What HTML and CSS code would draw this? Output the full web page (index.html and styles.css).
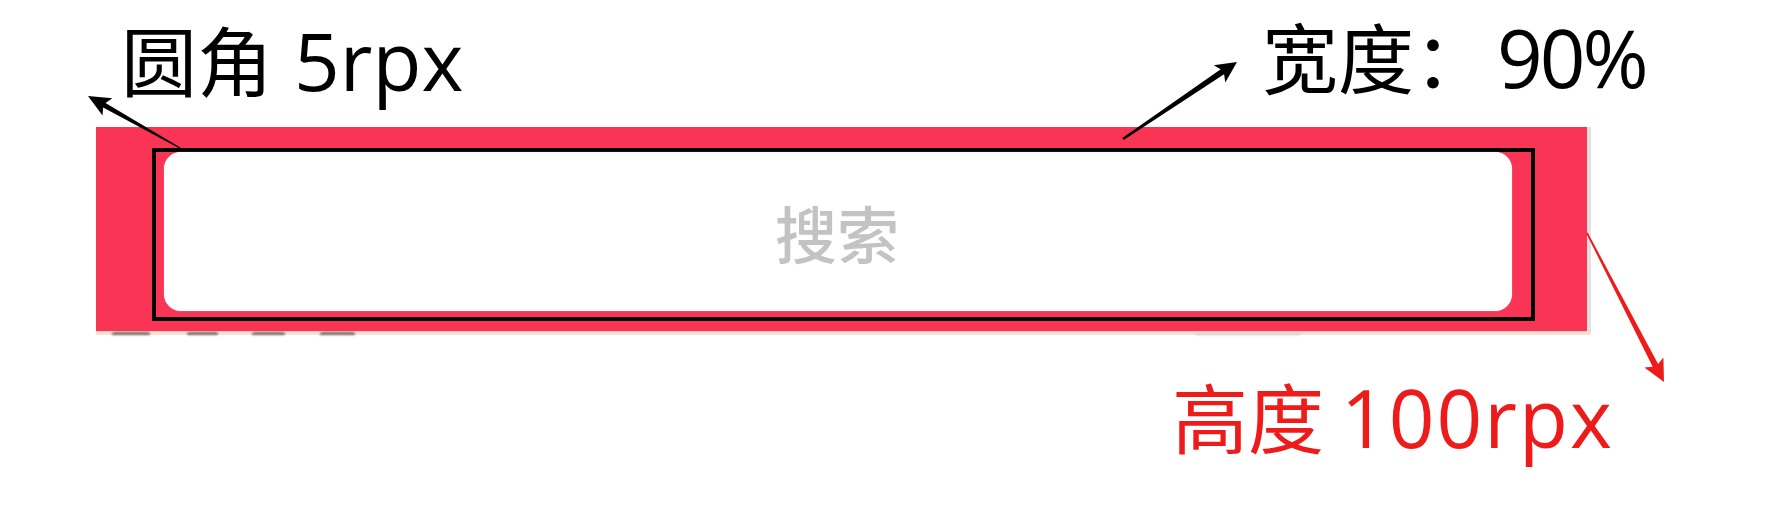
FILE: index.html
```html
<!DOCTYPE html>
<html lang="zh-CN">
<head>
<meta charset="utf-8">
<link rel="stylesheet" href="styles.css">
</head>
<body>
<div class="page">
  <div class="top-row">
    <div class="label label-radius">圆角 <span class="latin latin-shift">5rpx</span></div>
    <div class="label label-width">宽度： <span class="latin latin-tight">90%</span></div>
  </div>
  <div class="bar-wrap">
    <div class="bar">
      <div class="frame">
        <div class="search"><span class="search-text">搜索</span></div>
      </div>
    </div>
    <div class="strip">
      <span class="blob b1"></span><span class="blob b2"></span><span class="blob b3"></span><span class="blob b4"></span><span class="blob b5"></span>
    </div>
  </div>
  <div class="bottom-row">
    <div class="label label-height">高度 <span class="latin latin-wide">100rpx</span></div>
  </div>
  <svg class="arrows" width="1784" height="522" viewBox="0 0 1784 522">
    <polygon fill="#000" points="88,96 112.3,98.2 105.5,103 180.3,147.5 179.7,148.5 103.1,107.4 102.5,115.6"/>
    <polygon fill="#000" points="1237,62 1213.7,65.2 1220.7,69.3 1122.3,138 1123.7,140 1224.1,74.3 1225.3,82.4"/>
    <polygon fill="#ee1b1b" points="1664,382 1644.4,367.4 1652.7,366.8 1586.3,233.4 1587.7,232.6 1658.1,364 1663.4,357.6"/>
  </svg>
</div>
</body>
</html>
```
FILE: styles.css
```css
html, body {
  margin: 0;
  padding: 0;
  background: #fff;
}
.page {
  position: relative;
  width: 1784px;
  height: 522px;
  overflow: hidden;
  font-family: "Noto Sans CJK SC", "Open Sans", sans-serif;
}
.top-row {
  display: grid;
  grid-template-columns: 1141px auto;
  align-items: end;
  padding-left: 121px;
  height: 127px;
  box-sizing: border-box;
}
.label {
  font-family: "Noto Sans CJK SC", sans-serif;
  font-size: 76px;
  line-height: normal;
  white-space: nowrap;
  color: #000;
}
.latin {
  font-family: "Open Sans", "Noto Sans", sans-serif;
  font-size: 80px;
}
.latin-shift {
  margin-left: 4px;
}
.latin-tight {
  letter-spacing: -3px;
  margin-left: -10px;
}
.latin-wide {
  letter-spacing: 2px;
}
.label-radius {
  margin-bottom: 19px;
}
.label-width {
  margin-bottom: 22px;
}
.bar-wrap {
  margin-left: 96px;
  width: 1495px;
}
.bar {
  height: 204px;
  background: #fa3454;
  border-right: 4px solid #e3e1df;
  box-sizing: border-box;
  padding: 21px 0 0 56px;
}
.frame {
  width: 1383px;
  height: 173px;
  box-sizing: border-box;
  border: 4px solid #000;
  padding: 0 19px 6px 8px;
  display: flex;
}
.search {
  flex: 1;
  background: #fff;
  border-radius: 17px;
  box-shadow: 0 0 1px 0 rgba(255,255,255,0.8);
  display: flex;
  align-items: center;
  justify-content: center;
}
.search-text {
  font-family: "Noto Sans CJK SC", sans-serif;
  font-size: 62px;
  font-weight: 500;
  line-height: normal;
  color: #c3c3c3;
  filter: blur(0.6px);
  margin-left: -2px;
}
.strip {
  height: 4px;
  background: linear-gradient(#f6c9c2, #f9dcd2 40%, #fbe3da);
  display: flex;
  align-items: flex-end;
}
.blob {
  height: 3px;
  background: #7d6a66;
  border-radius: 2px 2px 0 0;
  filter: blur(0.8px);
}
.b1 { margin-left: 16px; width: 38px; }
.b2 { margin-left: 37px; width: 31px; }
.b3 { margin-left: 34px; width: 33px; }
.b4 { margin-left: 35px; width: 35px; }
.b5 { margin-left: 840px; width: 106px; background: #d8d2c8; height: 2px; }
.bottom-row {
  display: flex;
  padding-top: 25px;
}
.label-height {
  margin-left: 1172px;
  color: #ee1b1b;
}
.arrows {
  position: absolute;
  left: 0;
  top: 0;
  pointer-events: none;
}
```
